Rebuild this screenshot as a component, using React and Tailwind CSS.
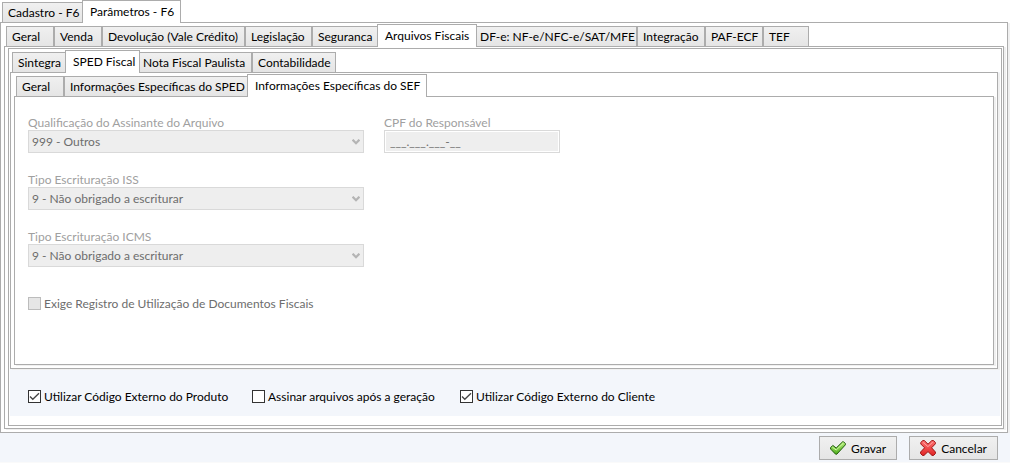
import { useState } from "react";

const INACTIVE =
  "h-5 border border-b-0 border-[#acacac] bg-linear-to-b from-[#f0f0f0] to-[#e5e5e5] pt-px";
const ACTIVE =
  "relative z-10 -mb-px border border-b-0 border-[#acacac] bg-white pl-[7px]";

function Tabs({ items, label, className = "" }) {
  return (
    <div role="tablist" aria-label={label} className={`flex items-end ${className}`}>
      {items.map(([text, size, active]) => (
        <button
          key={text}
          type="button"
          role="tab"
          aria-selected={Boolean(active)}
          className={`shrink-0 whitespace-nowrap text-left leading-[18px] ${size} ${active ? ACTIVE : INACTIVE}`}
        >
          {text}
        </button>
      ))}
    </div>
  );
}

function SelectField({ id, label, value }) {
  return (
    <div>
      <label htmlFor={id} className="block text-[#a0a0a0]">
        {label}
      </label>
      <div className="relative">
        <select
          id={id}
          disabled
          className="block h-[23px] w-full appearance-none border border-[#d9d9d9] bg-[#eeeeee] pl-[3px] text-[#6d6d6d] opacity-100"
        >
          <option>{value}</option>
        </select>
        <svg
          viewBox="0 0 8 6"
          className="pointer-events-none absolute right-1 top-[9px] h-[6px] w-2"
          aria-hidden="true"
        >
          <path d="M0.6 0.7 L4 4.2 L7.4 0.7" fill="none" stroke="#b4b4b4" strokeWidth="2.2" />
        </svg>
      </div>
    </div>
  );
}

function Check({ label, initial = false, disabled = false, className = "" }) {
  const [checked, setChecked] = useState(initial);
  return (
    <label
      className={`flex items-center gap-[3px] ${disabled ? "text-[#6d6d6d]" : "text-black"} ${className}`}
    >
      <span className="relative block size-[13px] shrink-0">
        <input
          type="checkbox"
          checked={checked}
          disabled={disabled}
          onChange={(e) => setChecked(e.target.checked)}
          className="block size-[13px] appearance-none border border-[#333333] bg-white disabled:border-[#bcbcbc] disabled:bg-[#e6e6e6]"
        />
        {checked && (
          <svg
            viewBox="0 0 13 13"
            className="pointer-events-none absolute inset-0 size-[13px]"
            aria-hidden="true"
          >
            <path d="M2 6.5 L4.8 9.3 L11 3.2" fill="none" stroke="#444" strokeWidth="1.3" />
          </svg>
        )}
      </span>
      <span className="whitespace-nowrap">{label}</span>
    </label>
  );
}

function OkIcon() {
  return (
    <svg viewBox="0 0 16 16" className="size-4 shrink-0" aria-hidden="true">
      <defs>
        <linearGradient id="ok" x1="0" y1="0" x2="0" y2="1">
          <stop offset="0" stopColor="#b4ee7a" />
          <stop offset="1" stopColor="#4fae1c" />
        </linearGradient>
      </defs>
      <path
        d="M0.6 7.6 L2.8 5.4 L6.2 8 L12.6 1.8 H13.6 L15.4 3.6 V4.8 L6.8 14.2 H5.6 L0.6 9 Z"
        fill="url(#ok)"
        stroke="#1f5c0c"
        strokeWidth="1"
        strokeLinejoin="round"
      />
      <path d="M2.4 7.2 L6.2 10 L13.4 3.2" fill="none" stroke="#d6fba8" strokeWidth="1" />
    </svg>
  );
}

function CancelIcon() {
  return (
    <svg viewBox="0 0 16 16" className="size-4 shrink-0" aria-hidden="true">
      <defs>
        <linearGradient id="no" x1="0" y1="0" x2="0" y2="1">
          <stop offset="0" stopColor="#ff7474" />
          <stop offset="1" stopColor="#e02424" />
        </linearGradient>
      </defs>
      <path
        d="M2.6 0.6 H4.4 L8 4.2 L11.8 0.6 H13.6 L15.4 2.6 V3.8 L11.6 7.8 L15.4 12 V13.6 L13.6 15.4 H12 L8 11.6 L4 15.4 H2.4 L0.6 13.6 V12 L4.6 7.8 L0.8 4 V2.6 Z"
        fill="url(#no)"
        stroke="#9c1414"
        strokeWidth="1"
        strokeLinejoin="round"
      />
      <path d="M3.2 2.4 L7.9 6.6 L12.8 2.2" fill="none" stroke="#ffa8a8" strokeWidth="0.9" />
    </svg>
  );
}

function ActionButton({ icon, children }) {
  return (
    <button
      type="button"
      className="flex h-6 items-center gap-[5px] border border-[#acacac] bg-linear-to-b from-[#f0f0f0] to-[#e5e5e5] px-[10px] text-black"
    >
      {icon}
      {children}
    </button>
  );
}

const PANEL = "border border-[#acacac] bg-white shadow-[2px_1px_0_#f0f0f0]";

const mainTabs = [
  ["Cadastro - F6", "w-20 border-r-0 pl-[5px]"],
  ["Parâmetros - F6", "h-[23px] w-[99px]", true],
];
const parameterTabs = [
  ["Geral", "w-12 pl-[5px]"],
  ["Venda", "w-12 pl-[5px]"],
  ["Devolução (Vale Crédito)", "w-[143px] pl-[5px]"],
  ["Legislação", "w-[67px] pl-[5px]"],
  ["Seguranca", "w-[65px] border-r-0 pl-[5px]"],
  ["Arquivos Fiscais", "h-[23px] w-[100px]", true],
  ["DF-e: NF-e/NFC-e/SAT/MFE", "w-[160px] border-l-0 pl-[3px]"],
  ["Integração", "w-[68px] pl-[5px]"],
  ["PAF-ECF", "w-[58px] pl-[5px]"],
  ["TEF", "w-[46px] pl-[5px]"],
];
const fiscalTabs = [
  ["Sintegra", "w-[53px] border-r-0 pl-[5px]"],
  ["SPED Fiscal", "h-[23px] w-[75px]", true],
  ["Nota Fiscal Paulista", "w-28 border-l-0 pl-[3px]"],
  ["Contabilidade", "w-[84px] pl-[5px]"],
];
const spedTabs = [
  ["Geral", "w-12 pl-[5px]"],
  ["Informações Específicas do SPED", "w-[183px] border-r-0 pl-[5px]"],
  ["Informações Específicas do SEF", "h-[23px] w-[180px]", true],
];

export default function App() {
  return (
    <main className="bg-white font-['Lato','Open_Sans',sans-serif] text-[12px] leading-[15px] text-black">
      <Tabs label="Seções" items={mainTabs} className="pl-0.5" />

      <div className={`mr-0.5 px-[3px] pb-[3px] ${PANEL}`}>
        <Tabs label="Parâmetros" items={parameterTabs} className="pl-0.5 pt-px" />

        <div className={`pb-0.5 pl-[3px] pr-px pt-px ${PANEL}`}>
          <div className="border border-[#acacac] px-px pb-[9px]">
            <Tabs label="Arquivos fiscais" items={fiscalTabs} className="pl-0.5 pt-px" />

            <div className="bg-[#f3f6fb]">
              <div className={`mr-0.5 px-[3px] pb-[3px] ${PANEL}`}>
                <Tabs label="SPED Fiscal" items={spedTabs} className="pl-0.5 pt-px" />

                <form className={`px-[13px] pb-[53px] pt-[18px] ${PANEL}`}>
                  <div className="flex items-start gap-5">
                    <div className="flex w-[336px] flex-col gap-[19px]">
                      <SelectField
                        id="qualificacao"
                        label="Qualificação do Assinante do Arquivo"
                        value="999 - Outros"
                      />
                      <SelectField
                        id="iss"
                        label="Tipo Escrituração ISS"
                        value="9 - Não obrigado a escriturar"
                      />
                      <SelectField
                        id="icms"
                        label="Tipo Escrituração ICMS"
                        value="9 - Não obrigado a escriturar"
                      />
                    </div>
                    <div className="w-44">
                      <label htmlFor="cpf" className="block text-[#a0a0a0]">
                        CPF do Responsável
                      </label>
                      <input
                        id="cpf"
                        type="text"
                        disabled
                        defaultValue="___.___.___-__"
                        className="block h-[23px] w-full border border-[#d9d9d9] bg-[#eeeeee] pl-[5px] text-[#6d6d6d] inset-ring inset-ring-white"
                      />
                    </div>
                  </div>
                  <Check
                    disabled
                    label="Exige Registro de Utilização de Documentos Fiscais"
                    className="mt-[29px]"
                  />
                </form>
              </div>

              <div className="flex pb-3 pl-[18px] pt-5">
                <Check initial label="Utilizar Código Externo do Produto" className="w-56" />
                <Check label="Assinar arquivos após a geração" className="w-52" />
                <Check initial label="Utilizar Código Externo do Cliente" />
              </div>
            </div>
          </div>
        </div>
      </div>

      <footer className="flex justify-end gap-3 border-b border-[#fafafa] bg-[#f3f6fb] pb-0.5 pr-3 pt-[3px]">
        <ActionButton icon={<OkIcon />}>Gravar</ActionButton>
        <ActionButton icon={<CancelIcon />}>Cancelar</ActionButton>
      </footer>
    </main>
  );
}
